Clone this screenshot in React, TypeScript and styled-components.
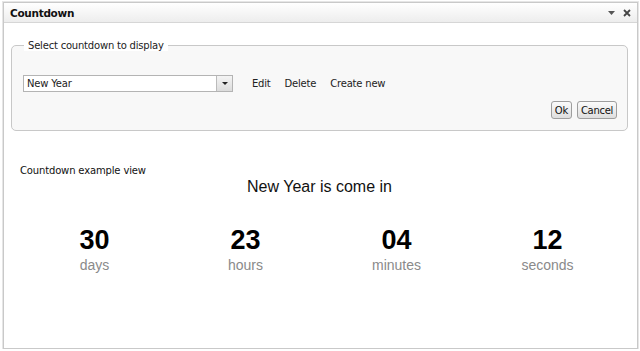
import React from 'react';
import styled, { createGlobalStyle } from 'styled-components';

const GlobalStyle = createGlobalStyle`
  html, body {
    margin: 0;
    padding: 0;
    background: #ffffff;
  }
  body {
    font-family: "Liberation Sans", Arial, sans-serif;
  }
`;

const Window = styled.div`
  box-sizing: border-box;
  margin: 2px 2px 0 3px;
  height: 347px;
  border: 1px solid #c9c9c9;
  box-shadow: 0 0 0 1px #e6e6e6;
  background: #fff;
  display: flex;
  flex-direction: column;
`;

const TitleBar = styled.div`
  height: 19px;
  display: flex;
  align-items: center;
  justify-content: space-between;
  padding: 0 6px 0 6px;
  background: linear-gradient(#ffffff, #ededed);
  border-bottom: 1px solid #d6d6d6;
`;

const Title = styled.span`
  font-family: "DejaVu Sans", Verdana, sans-serif;
  font-weight: bold;
  font-size: 10.5px;
  letter-spacing: -0.3px;
  color: #111;
`;

const TitleIcons = styled.div`
  display: flex;
  align-items: center;
  gap: 8px;
  color: #555;
`;

const Body = styled.div`
  padding: 17px 9px 0 7px;
  display: flex;
  flex-direction: column;
`;

const Fieldset = styled.fieldset`
  margin: 0;
  padding: 15px 10px 10px 11px;
  border: 1px solid #c8c8c8;
  border-radius: 5px;
  background: #f8f8f8;
  height: 91px;
  box-sizing: border-box;
  display: flex;
  flex-direction: column;
  font-family: "DejaVu Sans", Verdana, sans-serif;
  font-size: 10px;
  letter-spacing: -0.2px;
  color: #222;
`;

const Legend = styled.legend`
  margin-left: 1px;
  padding: 0 4px;
  background: #fff;
`;

const SelectRow = styled.div`
  display: flex;
  align-items: center;
  margin-top: 9px;
`;

const SelectBox = styled.div`
  box-sizing: border-box;
  width: 210px;
  height: 17px;
  border: 1px solid #b4b4b4;
  background: #fff;
  display: flex;
  align-items: center;
  justify-content: space-between;
  padding-left: 3px;
  margin-right: 19px;
`;

const SelectArrow = styled.div`
  box-sizing: border-box;
  width: 16px;
  height: 15px;
  background: linear-gradient(#f4f4f4, #dcdcdc);
  border-left: 1px solid #bbb;
  display: flex;
  align-items: center;
  justify-content: center;
`;

const LinkAction = styled.span`
  margin-right: 14px;
  color: #222;
`;

const ButtonRow = styled.div`
  display: flex;
  justify-content: flex-end;
  gap: 5px;
  margin-top: 9px;
`;

const Button = styled.button`
  font-family: "DejaVu Sans", Verdana, sans-serif;
  font-size: 10px;
  letter-spacing: -0.3px;
  height: 18px;
  padding: 0 3px;
  border: 1px solid #9e9e9e;
  border-radius: 3px;
  background: linear-gradient(#fbfbfb, #dedede);
  color: #111;
`;

const Caption = styled.div`
  font-family: "DejaVu Sans", Verdana, sans-serif;
  font-size: 10px;
  letter-spacing: -0.15px;
  color: #111;
  margin: 34px 0 0 9px;
`;

const Heading = styled.div`
  text-align: center;
  font-size: 16px;
  color: #111;
  margin-top: 2px;
`;

const Counters = styled.div`
  display: grid;
  grid-template-columns: repeat(4, 151px);
  margin: 29px 0 0 8px;
`;

const Counter = styled.div`
  display: flex;
  flex-direction: column;
  align-items: center;
`;

const Value = styled.div`
  font-size: 27px;
  font-weight: bold;
  color: #000;
  line-height: 30px;
`;

const Unit = styled.div`
  font-size: 14px;
  color: #8a8a8a;
  line-height: 18px;
  margin-top: 1px;
`;

const counters = [
  { value: '30', unit: 'days' },
  { value: '23', unit: 'hours' },
  { value: '04', unit: 'minutes' },
  { value: '12', unit: 'seconds' },
];

export default function App() {
  return (
    <>
      <GlobalStyle />
      <Window>
        <TitleBar>
          <Title>Countdown</Title>
          <TitleIcons>
            <svg width="7" height="4" viewBox="0 0 7 4">
              <path d="M0 0h7L3.5 4z" fill="#555" />
            </svg>
            <svg width="8" height="8" viewBox="0 0 8 8">
              <path d="M1 1l6 6M7 1L1 7" stroke="#444" strokeWidth="1.8" />
            </svg>
          </TitleIcons>
        </TitleBar>
        <Body>
          <Fieldset>
            <Legend>Select countdown to display</Legend>
            <SelectRow>
              <SelectBox>
                <span>New Year</span>
                <SelectArrow>
                  <svg width="6" height="3" viewBox="0 0 6 3">
                    <path d="M0 0h6L3 3z" fill="#222" />
                  </svg>
                </SelectArrow>
              </SelectBox>
              <LinkAction>Edit</LinkAction>
              <LinkAction>Delete</LinkAction>
              <LinkAction>Create new</LinkAction>
            </SelectRow>
            <ButtonRow>
              <Button>Ok</Button>
              <Button>Cancel</Button>
            </ButtonRow>
          </Fieldset>
          <Caption>Countdown example view</Caption>
          <Heading>New Year is come in</Heading>
          <Counters>
            {counters.map((c) => (
              <Counter key={c.unit}>
                <Value>{c.value}</Value>
                <Unit>{c.unit}</Unit>
              </Counter>
            ))}
          </Counters>
        </Body>
      </Window>
    </>
  );
}
